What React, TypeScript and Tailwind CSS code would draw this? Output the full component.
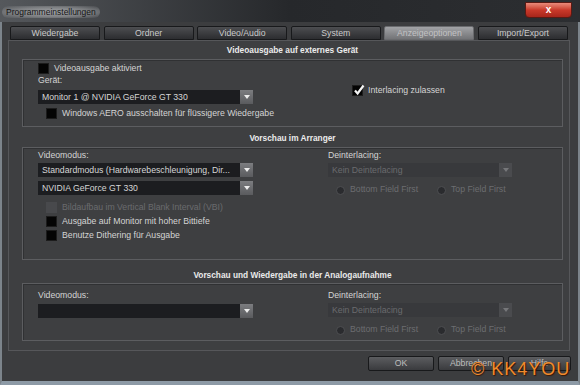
import React from 'react'

const tabs = ['Wiedergabe', 'Ordner', 'Video/Audio', 'System', 'Anzeigeoptionen', 'Import/Export']

function Check({ checked = false, disabled = false }: { checked?: boolean; disabled?: boolean }) {
  return (
    <span
      className={`relative flex h-[11px] w-[11px] shrink-0 items-center justify-center ${
        disabled ? 'bg-[#48494c]' : 'border border-[#1c1c1c] bg-[#040404]'
      }`}
    >
      {checked && (
        <svg viewBox="0 0 12 12" className="absolute left-[0px] top-[-2px] h-[12px] w-[12px]">
          <path d="M2 6.5 L4.6 9.5 L10.5 1.5" fill="none" stroke="#f4f4f4" strokeWidth="2.2" />
        </svg>
      )}
    </span>
  )
}

function Select({ text = '', width, disabled = false }: { text?: string; width: string; disabled?: boolean }) {
  return (
    <div className={`flex h-[14px] ${width} ${disabled ? 'bg-[#38393c]' : 'bg-[#1c1d20]'}`}>
      <span
        className={`flex-1 overflow-hidden whitespace-nowrap pl-[4px] leading-[14px] ${
          disabled ? 'text-[#6a6b6e]' : 'text-[#d6d6d6]'
        }`}
      >
        {text}
      </span>
      <span
        className={`flex w-[13px] items-center justify-center ${
          disabled ? 'bg-[#4a4b4e]' : 'bg-gradient-to-b from-[#7c7d80] to-[#5a5b5e]'
        }`}
      >
        <svg viewBox="0 0 6 4" className="h-[4px] w-[6px]">
          <path d="M0 0h6L3 4z" fill={disabled ? '#76777a' : '#ececec'} />
        </svg>
      </span>
    </div>
  )
}

function Radio({ label }: { label: string }) {
  return (
    <div className="flex items-center gap-[5px]">
      <span className="h-[9px] w-[9px] rounded-full border border-[#4e4f52] bg-[#2a2b2e]" />
      <span className="text-[#6c6d70]">{label}</span>
    </div>
  )
}

function Header({ title, h, pb }: { title: string; h: string; pb: string }) {
  return (
    <div className={`flex ${h} ${pb} items-end justify-center`}>
      <span className="text-[8.3px] font-bold leading-[11px] text-[#ebebeb]">{title}</span>
    </div>
  )
}

function Deinterlacing() {
  return (
    <div className="ml-[75px] flex flex-col">
      <div className="h-[14px] leading-[14px]">Deinterlacing:</div>
      <div className="mt-[1px]">
        <Select width="w-[184px]" text="Kein Deinterlacing" disabled />
      </div>
      <div className="mt-[7px] flex h-[12px] items-center pl-[8px]">
        <div className="w-[101px]">
          <Radio label="Bottom Field First" />
        </div>
        <Radio label="Top Field First" />
      </div>
    </div>
  )
}

export default function App() {
  return (
    <div className="relative flex h-[385px] w-[580px] flex-col overflow-hidden bg-[#1d1e20] font-['Liberation_Sans',Arial,sans-serif] text-[8.7px] text-[#d4d4d4]">
      {/* title bar */}
      <div className="flex h-[22px] shrink-0 items-start justify-between bg-gradient-to-r from-[#55585c] via-[#26282b] to-[#2c2e31] pt-[2px]">
        <span className="ml-[2px] mt-[4px] rounded-[6px] bg-[radial-gradient(ellipse_at_center,#a3a5a8_0%,#7e8083_55%,transparent_100%)] px-[4px] text-[8.5px] leading-[12px] text-[#151515]">
          Programmeinstellungen
        </span>
        <span className="mr-[8px] flex h-[16px] w-[47px] items-center justify-center rounded-b-[4px] border border-[#5a1a14] bg-gradient-to-b from-[#e98a7a] via-[#c9392a] to-[#a8261b] text-[10px] font-bold leading-none text-white">
          x
        </span>
      </div>

      {/* client */}
      <div className="flex flex-1 flex-col border-x-[2px] border-b-[4px] border-x-[#7c848b] border-b-[#8d9aa6] bg-[#3c3d3f]">
        {/* tabs */}
        <div className="mt-[4px] flex h-[14px] gap-[3.6px] pl-[8px]">
          {tabs.map((t) => {
            const active = t === 'Anzeigeoptionen'
            return (
              <div
                key={t}
                className={`flex w-[90px] items-center justify-center rounded-t-[2px] border text-[8.7px] leading-none ${
                  active
                    ? 'border-[#6a6b6e] bg-gradient-to-b from-[#a2a3a6] to-[#737477] text-[#c2c2c4]'
                    : 'border-[#18191b] bg-gradient-to-b from-[#4d4e51] to-[#2c2d30] text-[#cbcbcb]'
                }`}
              >
                {t}
              </div>
            )
          })}
        </div>

        {/* panel */}
        <div className="ml-[6px] flex h-[311px] w-[562px] flex-col border border-[#56575a] bg-[#3e3f41] pl-[13px] pr-[6px]">
          <Header title="Videoausgabe auf externes Gerät" h="h-[18px]" pb="pb-[3px]" />
          <div className="flex h-[68px] border border-[#5c5d60] shadow-[inset_1px_1px_0_#303133]">
            <div className="flex w-[230px] flex-col pl-[15px] pt-[3px]">
              <div className="flex h-[11px] items-center gap-[5px]">
                <Check />
                <span>Videoausgabe aktiviert</span>
              </div>
              <div className="h-[13px] leading-[13px]">Gerät:</div>
              <div className="mt-[3px]">
                <Select width="w-[215px]" text="Monitor 1 @ NVIDIA GeForce GT 330" />
              </div>
              <div className="ml-[8px] mt-[4px] flex h-[11px] items-center gap-[5px]">
                <Check />
                <span className="whitespace-nowrap">Windows AERO ausschalten für flüssigere Wiedergabe</span>
              </div>
            </div>
            <div className="ml-[99px] pt-[25px]">
              <div className="flex h-[11px] items-center gap-[5px]">
                <Check checked />
                <span>Interlacing zulassen</span>
              </div>
            </div>
          </div>

          <Header title="Vorschau im Arranger" h="h-[20px]" pb="pb-[3px]" />
          <div className="flex h-[113px] border border-[#5c5d60] shadow-[inset_1px_1px_0_#303133]">
            <div className="flex w-[230px] flex-col pl-[15px]">
              <div className="h-[14px] leading-[14px]">Videomodus:</div>
              <div className="mt-[1px]">
                <Select width="w-[215px]" text="Standardmodus (Hardwarebeschleunigung, Dir..." />
              </div>
              <div className="mt-[4px]">
                <Select width="w-[215px]" text="NVIDIA GeForce GT 330" />
              </div>
              <div className="ml-[8px] mt-[7px] flex flex-col gap-[3px]">
                <div className="flex h-[11px] items-center gap-[5px]">
                  <Check disabled />
                  <span className="whitespace-nowrap text-[#6a6b6e]">Bildaufbau im Vertical Blank Interval (VBI)</span>
                </div>
                <div className="flex h-[11px] items-center gap-[5px]">
                  <Check />
                  <span>Ausgabe auf Monitor mit hoher Bittiefe</span>
                </div>
                <div className="flex h-[11px] items-center gap-[5px]">
                  <Check />
                  <span>Benutze Dithering für Ausgabe</span>
                </div>
              </div>
            </div>
            <Deinterlacing />
          </div>

          <Header title="Vorschau und Wiedergabe in der Analogaufnahme" h="h-[23px]" pb="pb-[2px]" />
          <div className="flex h-[58px] border border-[#5c5d60] pt-[4px] shadow-[inset_1px_1px_0_#303133]">
            <div className="flex w-[230px] flex-col pl-[15px]">
              <div className="h-[14px] leading-[14px]">Videomodus:</div>
              <div className="mt-[2px]">
                <Select width="w-[215px]" />
              </div>
            </div>
            <Deinterlacing />
          </div>
        </div>

        {/* buttons */}
        <div className="mt-[5px] flex justify-end gap-[4px] pr-[7px]">
          {[
            ['OK', 'w-[66px]'],
            ['Abbrechen', 'w-[66px]'],
            ['Hilfe', 'w-[63px]'],
          ].map(([label, w]) => (
            <div
              key={label}
              className={`flex h-[15px] ${w} items-center justify-center rounded-[2px] border border-[#18191b] bg-gradient-to-b from-[#5c5d60] to-[#3a3b3e] leading-none text-[#bebebe]`}
            >
              {label}
            </div>
          ))}
        </div>
      </div>

      {/* watermark */}
      <div className="absolute left-[471px] top-[360px] text-[18px] leading-none tracking-[1px] text-[#f08a2c] [text-shadow:1px_1px_1px_#3a1800]">
        © KK4YOU
      </div>
    </div>
  )
}
